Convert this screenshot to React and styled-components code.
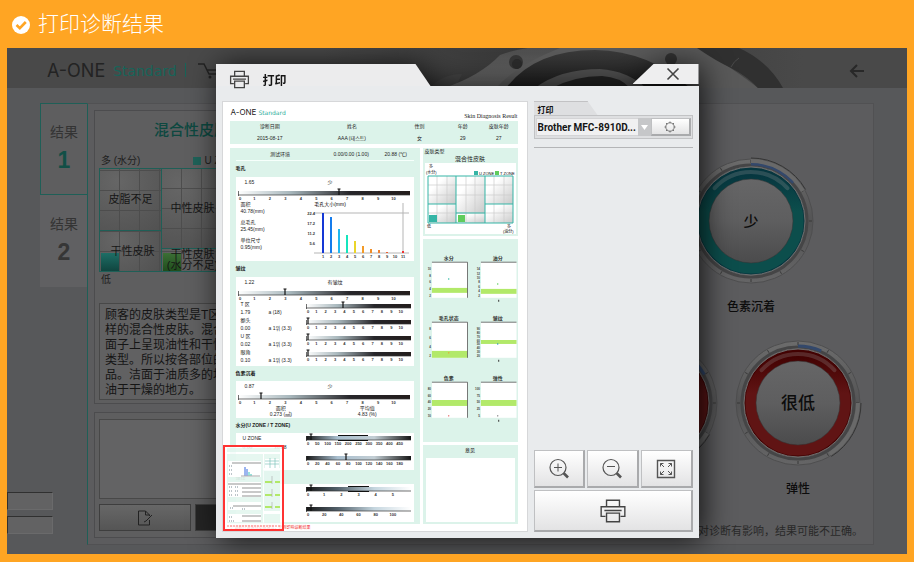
import React from 'react';
import styled, { createGlobalStyle } from 'styled-components';

const teal = '#1f5f57';
const mint = '#dcf3ea';

const GlobalStyle = createGlobalStyle`
  *, *::before, *::after { box-sizing: border-box; }
  body { margin: 0; background: #ffa523; }
  body, button, select, input, textarea { font-family: "Liberation Sans", "Noto Sans CJK SC", sans-serif; }
  h1, h2, h3, p, ul { margin: 0; padding: 0; }
  svg { display: block; }
`;

const Page = styled.main`
  display: flex;
  flex-direction: column;
  min-height: 100vh;
  padding: 0 7px 8px;
  background: #ffa523;
`;
const PageHeader = styled.header`
  display: flex;
  align-items: center;
  gap: 8px;
  height: 48px;
  padding: 2px 0 0 5px;
`;
const PageTitle = styled.h1`
  padding-bottom: 6px;
  font: 300 21px/32px "Noto Sans CJK SC", sans-serif;
  color: #fff;
`;
const Screen = styled.div`
  position: relative;
  flex: 1;
  display: flex;
  flex-direction: column;
  min-height: 506px;
  overflow: hidden;
  background: #57585a;
`;

/* ---- dimmed application behind the dialog ---- */
const AppBar = styled.header`
  position: relative;
  display: flex;
  align-items: center;
  justify-content: space-between;
  height: 40px;
  padding: 6px 42px 0 40px;
  background: #494949;
`;
const BarArt = styled.svg`
  position: absolute;
  left: 316px;
  top: 0;
`;
const Brand = styled.div`
  position: relative;
`;
const BarButton = styled.button`
  position: relative;
  padding: 0;
  border: 0;
  background: none;
`;
const AppBody = styled.div`
  flex: 1;
  display: flex;
  padding: 15px 33px 9px 0;
`;
const Rail = styled.div`
  display: flex;
  flex-direction: column;
  justify-content: space-between;
  width: 80px;
  padding-bottom: 11px;
`;
const Tabs = styled.div`
  display: flex;
  flex-direction: column;
  margin-left: 33px;
`;
const Tab = styled.button`
  display: flex;
  flex-direction: column;
  align-items: center;
  gap: 2px;
  height: 92px;
  padding: 16px 0 0;
  border: 1px solid ${p => (p.$active ? teal : 'transparent')};
  border-right: 0;
  background: ${p => (p.$active ? '#5e5e5f' : '#606062')};
  color: #343434;
  font-size: 14px;
  line-height: 24px;
`;
const TabNumber = styled.strong`
  font-size: 23px;
  line-height: 28px;
  color: ${p => (p.$active ? '#124f46' : '#363636')};
`;
const RailFields = styled.div`
  display: grid;
  gap: 6px;
  width: 46px;
`;
const RailField = styled.input`
  width: 100%;
  height: 18px;
  border: 1px solid #6a6a6b;
  border-top-color: #303030;
  border-left-color: #303030;
  background: #626263;
`;
const Panel = styled.section`
  flex: 1;
  display: flex;
  min-width: 0;
  border: 1px solid #515153;
  border-left: 1px solid ${teal};
  background: #5c5c5e;
`;
const ResultColumn = styled.div`
  display: flex;
  flex-direction: column;
  gap: 8px;
  width: 242px;
  padding: 6px;
`;
const Card = styled.div`
  display: flex;
  flex-direction: column;
  padding: ${p => p.$pad};
  border: 1px solid #4c4c4e;
  background: #5e5e5f;
  flex: ${p => (p.$grow ? 1 : 'none')};
`;
const SkinTitle = styled.h2`
  height: 42px;
  padding: 7px 0 0 55px;
  font: 500 15px/22px "Noto Sans CJK SC", sans-serif;
  color: #0d4840;
  white-space: nowrap;
`;
const AxisRow = styled.div`
  display: flex;
  align-items: center;
  gap: 3px;
  height: 15px;
  padding-left: 2px;
  font-size: 10px;
  line-height: 15px;
  color: #202020;
  white-space: nowrap;
`;
const Legend = styled.span`
  display: flex;
  align-items: center;
  gap: 3px;
  margin-left: 50px;
  &::before { content: ''; width: 8px; height: 8px; background: #1f6259; }
`;
const TypeMap = styled.div`
  display: grid;
  grid-template-columns: 62px 62px 1fr;
  height: 104px;
  border: 1px solid ${teal};
`;
const TypeColumn = styled.div`
  display: grid;
  grid-template-rows: ${p => p.$rows};
  border-right: 1px solid ${teal};
`;
const TypeCell = styled.div`
  display: flex;
  align-items: ${p => (p.$low ? 'end' : 'center')};
  justify-content: center;
  padding: ${p => p.$pad || 0};
  border-bottom: 1px solid ${teal};
  font-size: 11px;
  line-height: 11px;
  color: #161616;
  text-align: center;
  white-space: nowrap;
  background:
    ${p => (p.$chip ? `linear-gradient(${p.$chip}) 1px 100% / 18px 18px no-repeat,` : '')}
    repeating-linear-gradient(90deg, transparent 0 19px, #4d4d4d 19px 20px),
    repeating-linear-gradient(0deg, transparent 0 19px, #4d4d4d 19px 20px),
    radial-gradient(circle at 30% 20%, #666, #515151);
`;
const Description = styled.p`
  margin-top: 16px;
  padding: 4px 5px 3px;
  height: 97px;
  overflow: hidden;
  border: 1px solid #484848;
  background: #616162;
  color: #151515;
  font-size: 12px;
  line-height: 15px;
  white-space: pre;
`;
const Note = styled.textarea`
  display: block;
  flex: 1;
  min-height: 78px;
  border: 1px solid #484848;
  background: #636364;
  resize: none;
`;
const NoteActions = styled.div`
  display: grid;
  grid-template-columns: 92px 1fr;
  gap: 4px;
  margin-top: 5px;
`;
const NoteButton = styled.button`
  display: grid;
  place-items: center;
  height: 27px;
  padding: 0;
  border: 1px solid #3e3e3e;
  background: ${p => (p.$dark ? '#242424' : 'linear-gradient(#676767, #555)')};
`;
const GaugeArea = styled.div`
  flex: 1;
  display: flex;
  flex-direction: column;
  align-items: flex-end;
  min-width: 0;
  padding-top: 53px;
`;
const GaugeRow = styled.div`
  display: flex;
  gap: 15px;
  height: 182px;
  padding-right: ${p => p.$right}px;
`;
const GaugeItem = styled.figure`
  display: flex;
  flex-direction: column;
  align-items: center;
  gap: 11px;
  margin: 0;
`;
const GaugeName = styled.figcaption`
  font: 500 12px/20px "Noto Sans CJK SC", sans-serif;
  color: #0c0c0c;
`;
const Footnote = styled.p`
  padding-right: 10px;
  font-size: 11px;
  line-height: 20px;
  color: #292929;
  white-space: nowrap;
`;

/* ---- print dialog ---- */
const Dialog = styled.div`
  position: absolute;
  inset: 16px 0;
  display: flex;
  flex-direction: column;
  width: calc(100% - 40px);
  max-width: 483px;
  margin: 0 auto;
  filter: drop-shadow(4px 2px 15px rgba(0, 0, 0, 0.8));
`;
const DialogTop = styled.div`
  display: flex;
  justify-content: space-between;
  align-items: flex-start;
  height: 22px;
`;
const TitleTab = styled.div`
  width: 215px;
  height: 22px;
  background: #ececed;
  clip-path: polygon(0 0, 200px 0, 215px 22px, 0 22px);
`;
const DialogTitle = styled.div`
  position: absolute;
  left: 13px;
  top: 5px;
  display: flex;
  align-items: center;
  gap: 13px;
`;
const TitleText = styled.h2`
  font: 700 12px/20px "Noto Sans CJK SC", sans-serif;
  color: #151515;
`;
const CloseButton = styled.button`
  display: grid;
  place-items: center;
  width: 66px;
  height: 20px;
  padding: 0 0 0 14px;
  border: 0;
  background: #eeeeef;
  clip-path: polygon(21px 0, 100% 0, 100% 100%, 0 100%);
`;
const DialogBody = styled.div`
  flex: 1;
  display: grid;
  grid-template-columns: minmax(0, 1fr) 159px;
  gap: 6px;
  padding: 15px 6px 6px;
  background: #e9ebed;
`;
const Side = styled.aside`
  display: flex;
  flex-direction: column;
`;
const SideTab = styled.label`
  width: 64px;
  height: 14px;
  padding-left: 4px;
  background: #dedfe1;
  border-top: 1px solid #c2c2c4;
  clip-path: polygon(0 0, 54px 0, 100% 100%, 0 100%);
  font: 700 8px/15px "Noto Sans CJK SC", sans-serif;
  color: #111;
`;
const PrinterBox = styled.div`
  display: grid;
  grid-template-columns: minmax(0, 1fr) 40px;
  height: 24px;
  padding: 2px 1px;
  border: 1px solid #c2c3c5;
  background: #dedfe1;
`;
const SelectWrap = styled.div`
  display: grid;
  grid-template-columns: minmax(0, 1fr) 13px;
  background: #f0f0f1;
`;
const PrinterSelect = styled.select`
  grid-area: 1 / 1 / 2 / 3;
  appearance: none;
  width: 100%;
  padding: 0 12px 0 1px;
  border: 1px solid #d4d4d6;
  border-radius: 0;
  background: transparent;
  color: #151515;
  font: 700 10px/15px Roboto, sans-serif;
`;
const SelectArrow = styled.span`
  grid-area: 1 / 2;
  display: grid;
  place-items: center;
  background: #c6c7c9;
  pointer-events: none;
`;
const ToolButton = styled.button`
  display: grid;
  place-items: center;
  min-width: 0;
  height: ${p => (p.$h ? `${p.$h}px` : 'auto')};
  padding: 0;
  border: 1px solid #bfc0c2;
  border-right: 2px solid #a9aaac;
  border-bottom: 2px solid #a9aaac;
  background: linear-gradient(#fff, #e3e3e4);
  color: #4a4a4a;
`;
const Rule = styled.hr`
  width: 100%;
  margin: 8px 0 0;
  border: 0;
  border-top: 1px solid #b4b5b7;
`;
const Tools = styled.div`
  display: grid;
  grid-template-columns: repeat(3, 1fr);
  gap: 2px;
  margin-top: auto;
`;
const WideTool = styled(ToolButton)`
  grid-column: 1 / -1;
`;

/* ---- report preview ---- */
const Preview = styled.article`
  position: relative;
  display: flex;
  flex-direction: column;
  padding: 4px 9px 0 7px;
  border: 1px solid #d6d7d9;
  background: #fff;
  color: #222;
  font-size: 5px;
  line-height: 7px;
`;
const ReportHead = styled.div`
  display: flex;
  justify-content: space-between;
  height: 15px;
`;
const ReportBrand = styled.div`
  display: flex;
  gap: 2px;
  padding-left: 1px;
  font: 8px/12px Inter, sans-serif;
  color: #222;
`;
const ReportBrandLine = styled.span`
  font: 6px/13px "DejaVu Sans", sans-serif;
  color: #2eae9c;
`;
const ReportTitle = styled.h3`
  padding-top: 6px;
  font: 400 6px/8px "Liberation Serif", serif;
`;
const InfoTable = styled.table`
  width: 100%;
  height: 23px;
  margin-bottom: 4px;
  border-collapse: collapse;
  table-layout: fixed;
  background: ${mint};
  text-align: center;
  th, td { padding: 2px 0 0; font-weight: 400; }
`;
const ReportGrid = styled.div`
  flex: 1;
  display: grid;
  grid-template-columns: minmax(0, 2fr) minmax(0, 1fr);
  gap: 3px;
`;
const LeftSheet = styled.div`
  padding: 0 6px 2px;
  background: ${mint};
`;
const SheetHead = styled.div`
  display: grid;
  grid-template-columns: 5fr 3fr 2fr;
  align-items: center;
  height: 13px;
  border-bottom: 1px solid #f6fffb;
  text-align: center;
`;
const Label = styled.h3`
  height: ${p => p.$h || 16}px;
  padding-top: 4px;
  font-weight: 700;
  font-size: 5px;
  line-height: 7px;
`;
const Sheet = styled.div`
  height: ${p => p.$h}px;
  padding: 0 3px 0 2px;
  background: #fff;
`;
const Readings = styled.div`
  display: grid;
  grid-template-columns: 1fr 1fr;
  height: 11px;
  padding: 2px 0 0 7px;
`;
const Split = styled.div`
  display: grid;
  grid-template-columns: 68px minmax(0, 1fr);
`;
const Measures = styled.div`
  display: flex;
  flex-direction: column;
  gap: 4px;
  padding-left: 3px;
`;
const AreaReadings = styled.div`
  display: grid;
  grid-template-columns: 28px 1fr;
  grid-auto-rows: 8px;
  padding-left: 3px;
`;
const MoistureReadings = styled.div`
  display: grid;
  grid-template-columns: 1fr 1fr;
  grid-auto-rows: 9px;
  padding: 2px 0 0 5px;
`;
const Line = styled.p`
  font-size: 5px;
  line-height: 7px;
`;
const Halves = styled.div`
  display: grid;
  grid-template-columns: 1fr 1fr;
  grid-auto-rows: 6px;
  text-align: center;
`;
const RightSheets = styled.div`
  display: grid;
  grid-template-rows: 88px minmax(0, 1fr) 79px;
  gap: 3px;
`;
const RightSheet = styled.div`
  display: flex;
  flex-direction: column;
  gap: ${p => p.$gap || 0}px;
  padding: ${p => p.$pad};
  background: ${mint};
`;
const Centered = styled.p`
  font-size: ${p => p.$size || 5}px;
  line-height: 8px;
  text-align: center;
`;
const Blank = styled.div`
  flex: 1;
  background: #fff;
`;
const MiniGrid = styled.div`
  display: grid;
  grid-template-columns: 1fr 1fr;
  gap: 2px 6px;
`;
const BandSvg = styled.svg`
  overflow: visible;
`;
const Warning = styled.p`
  height: 7px;
  color: #f02828;
  font-size: 4px;
  line-height: 7px;
`;
const Thumbnail = styled.div`
  position: absolute;
  left: 0;
  bottom: 0;
  width: 61px;
  height: 86px;
  border: 2px solid #f33;
  background: rgba(255, 255, 255, 0.75);
`;

const PrinterIcon = ({ size, weight = 1.6 }) => (
  <svg width={size} height={size} viewBox="0 0 26 26" fill="none" stroke="#444" strokeWidth={weight} aria-hidden="true">
    <path d="M7 9V3h12v6M6 18H2V9h22v9h-4M7 15h12v8H7zM5 12.5h16" />
  </svg>
);

const dialPoint = (r, deg) => {
  const a = (deg * Math.PI) / 180;
  return `${65 + r * Math.sin(a)} ${65 - r * Math.cos(a)}`;
};
const dialArc = (r, from, to) => `M${dialPoint(r, from)}A${r} ${r} 0 0 1 ${dialPoint(r, to)}`;

function Gauge({ id, label, name, dark, light, level, from, to }) {
  return (
    <GaugeItem>
      <svg width="128" height="128" viewBox="1 1 128 128" role="img" aria-label={`${name} ${label}`}>
        <defs>
          <linearGradient id={`${id}-rim`} x1="0" y1="0" x2="0" y2="1">
            <stop offset="0" stopColor="#6c6c6c" /><stop offset=".5" stopColor="#545455" /><stop offset="1" stopColor="#656566" />
          </linearGradient>
          <linearGradient id={`${id}-ring`} x1="0" y1="0" x2="0" y2="1">
            <stop offset="0" stopColor={dark} /><stop offset=".4" stopColor={light} /><stop offset="1" stopColor={light} />
          </linearGradient>
          <linearGradient id={`${id}-face`} x1="0" y1="0" x2="0" y2="1">
            <stop offset="0" stopColor="#666667" /><stop offset=".5" stopColor="#5e5e5f" /><stop offset="1" stopColor="#4b4b4c" />
          </linearGradient>
        </defs>
        <circle cx="65" cy="65" r="62" fill={`url(#${id}-rim)`} stroke="#4e4e4f" />
        <circle cx="65" cy="65" r="56" fill="none" stroke="#454546" strokeWidth="3" />
        {Array.from({ length: 12 }, (_, i) => (
          <path key={i} d={`M${dialPoint(58, i * 30)}L${dialPoint(61, i * 30)}`} stroke="#393939" />
        ))}
        <path d={dialArc(57, 0, level)} fill="none" stroke="#33486b" strokeWidth="3" />
        <path d={dialArc(60, from, to)} fill="none" stroke="#696969" strokeWidth="4" />
        <path d={dialArc(63, from, to)} fill="none" stroke="#353535" strokeWidth="1" />
        <circle cx="65" cy="65" r="54" fill={dark} stroke="#6e6e6e" />
        <circle cx="65" cy="65" r="47" fill="none" stroke={`url(#${id}-ring)`} strokeWidth="11" />
        <path d={dialArc(49, -48, 48)} fill="none" stroke="#9a9a9a" strokeOpacity=".25" strokeWidth="4" strokeLinecap="round" />
        <circle cx="65" cy="65" r="42" fill={`url(#${id}-face)`} stroke="#333" strokeOpacity=".5" />
        <text x="65" y="71" textAnchor="middle" fontSize={label.length > 1 ? 17 : 15} fontWeight="500" fontFamily="Noto Sans CJK SC, sans-serif" fill="#0c0c0c">{label}</text>
      </svg>
      <GaugeName>{name}</GaugeName>
    </GaugeItem>
  );
}

const tens = ['0', '1', '2', '3', '4', '5', '6', '7', '8', '9', '10'];
const tones = {
  dark: ['#fff', '#a9b8bd', '#27262a', '#231d1c'],
  middle: ['#151515', '#a9bfcf', '#c3ced4', '#151515'],
  light: ['#151515', '#52606a', '#c5d6df', '#fff'],
};

function Scale({ id, width = 172, at, ticks = tens, tone = 'dark', band, height = 13 }) {
  const step = (width - 2) / ticks.length;
  return (
    <svg width="100%" height={height} viewBox={`0 0 ${width} ${height}`} preserveAspectRatio="xMinYMin meet" aria-hidden="true">
      <defs>
        <linearGradient id={id}>
          {tones[tone].map((c, i) => <stop key={c + i} offset={[0, 0.3, 0.65, 1][i]} stopColor={c} />)}
        </linearGradient>
      </defs>
      <rect x="0" y="3" width={width} height="4" fill={`url(#${id})`} />
      <path d={`M0 7h${width}M.5 3v5`} stroke="#333" strokeWidth=".7" />
      {band && <path d={`M${band[0]} 2.5H${band[1]}M${band[0]} 7.5H${band[1]}`} stroke="#111" />}
      <path d={`M${at} 7V1M${at - 1.5} 1h3`} stroke="#111" strokeWidth="1.2" />
      {ticks.map((t, i) => (
        <text key={t} x={1 + i * step} y="12" fontSize="4" fontWeight="700" textAnchor={i ? 'middle' : 'start'} fill="#333">{t}</text>
      ))}
    </svg>
  );
}

const bars = [
  [40, '#1538d5'], [36, '#157cec'], [24, '#20b7ef'], [18, '#15e5bd'], [12, '#ead52a'],
  [7, '#f39b28'], [4, '#f08d28'], [3, '#ee8030'], [1, '#ee6030'], [0, '#e33'], [2, '#e33'],
];

const PoreChart = () => (
  <svg width="100%" height="57" viewBox="0 0 105 57" preserveAspectRatio="xMinYMin meet" role="img" aria-label="毛孔大小分布">
    <text x="24" y="5" fontSize="5" textAnchor="middle">毛孔大小(mm)</text>
    <path d="M8 12H103M8 52H103M97 2V52" stroke="#b5b5b5" />
    {['22.4', '17.2', '11.2', '5.6'].map((t, i) => (
      <text key={t} x="9" y={14 + i * 10} fontSize="4" fontWeight="700" textAnchor="end" fill="#333">{t}</text>
    ))}
    {bars.map(([h, c], i) => (
      <g key={i}>
        <rect x={16 + i * 8} y={52 - h} width="2" height={h} fill={c} />
        <text x={17 + i * 8} y="57" fontSize="4" fontWeight="700" textAnchor="middle" fill="#333">{i + 1}</text>
      </g>
    ))}
  </svg>
);

const SkinMap = () => (
  <svg width="100%" height="71" viewBox="0 0 91 71" preserveAspectRatio="xMidYMin meet" role="img" aria-label="皮肤类型图">
    <defs>
      <linearGradient id="tile" x1="0" y1="0" x2="1" y2="1">
        <stop offset=".3" stopColor="#fff" /><stop offset="1" stopColor="#c9c9c9" />
      </linearGradient>
    </defs>
    <rect width="91" height="71" fill="#fff" />
    <text x="4" y="5" fontSize="4">多</text><text x="1" y="11" fontSize="4">(水分)</text>
    <path d="M49 8h4v4h-4z" fill="#35b5a6" /><text x="54" y="12" fontSize="4">U ZONE</text>
    <path d="M70 8h4v4h-4z" fill="#60cc5c" /><text x="75" y="12" fontSize="4">T ZONE</text>
    {[[3, 13, 28], [3, 41, 19], [31, 13, 37], [31, 50, 10], [60, 13, 28], [60, 41, 19]].map(([x, y, h]) => (
      <rect key={`${x}-${y}`} x={x} y={y} width={x === 31 ? 29 : 28} height={h} fill="url(#tile)" />
    ))}
    <path d="M12 13V60M22 13V60M41 13V60M50 13V60M69 13V60M79 13V60M3 22H88M3 32H88M3 50H88" stroke="#ccc" strokeWidth=".7" />
    <path d="M3 13H88V60H3zM31 13V60M60 13V60M3 41H31M31 50H60M60 41H88" fill="none" stroke="#35b5a6" />
    <path d="M4 52h8v7H4z" fill="#35b5a6" /><path d="M33 52h7v7h-7z" fill="#60cc5c" />
    <text x="2" y="65" fontSize="4">低</text><text x="82" y="65" fontSize="4">多</text><text x="78" y="70" fontSize="4">(油分)</text>
  </svg>
);

function BandChart({ name, band, height, ticks, dot, color, right }) {
  return (
    <BandSvg width="100%" height="58" viewBox="0 0 44 58" role="img" aria-label={name}>
      <text x="24" y="9" fontSize="5" fontWeight="700" textAnchor="middle" fill="#333">{name}</text>
      <rect x="7" y="11" width="36" height="36" fill="#fff" />
      <rect x="7" y={band} width="36" height={height} fill="#b2e969" />
      <path d={right ? 'M7 11H43' : 'M7 11H43V47'} fill="none" stroke="#555" strokeWidth=".8" />
      {ticks.map((t, i) => <text key={t} x="6" y={19 + i * (27 / (ticks.length - 1))} fontSize="3" fontWeight="700" textAnchor="end" fill="#444">{t}</text>)}
      <circle cx="24" cy={dot} r=".7" fill={color} />
      {right && <path d="M25 49v2" stroke="#333" />}
    </BandSvg>
  );
}

const miniCharts = [
  { name: '水分', band: 37, height: 5, ticks: [10, 8, 6, 4, 2], dot: 28, color: '#20b59f' },
  { name: '油分', band: 38, height: 5, ticks: [14, 12, 10, 8, 6, 4, 2], dot: 33, color: '#55cc55', right: true },
  { name: '毛孔状态', band: 40, height: 7, ticks: [8, 6, 4, 2], dot: 42, color: '#ff8c28' },
  { name: '皱纹', band: 29, height: 4, ticks: [90, 80, 70, 60, 50, 40, 30, 20], dot: 33, color: '#2090c0', right: true },
  { name: '色素', band: 29, height: 6, ticks: [80, 60, 40, 20, 10], dot: 45, color: '#e04040' },
  { name: '弹性', band: 29, height: 6, ticks: [100, 75, 50, 25, 5], dot: 45, color: '#606060', right: true },
];

const wrinkleAreas = [
  { id: 'tzone', name: 'T 区', value: '1.79', grade: 'a (18)', at: 37 },
  { id: 'forehead', name: '额头', value: '0.00', grade: 'a 1위 (3.3)', at: 2 },
  { id: 'uzone', name: 'U 区', value: '0.02', grade: 'a 1위 (3.3)', at: 2 },
  { id: 'eye', name: '眼角', value: '0.10', grade: 'a 1위 (3.3)', at: 2 },
];

const MiniPage = () => (
  <svg width="57" height="82" viewBox="0 0 57 82" aria-hidden="true">
    <path d="M2 1H55V5H2zM2 7H38V76H2zM39 7H55V21H39zM39 24H55V64H39zM39 67H55V76H39z" fill={mint} fillOpacity=".7" />
    <path d="M3 14H36V30H3zM3 35H36V50H3zM3 55H36V63H3zM3 67H36V75H3zM40 12H54V21H40z" fill="#fff" />
    <path d="M7 16H36M3 37H36M17 41H36M17 45H36M17 49H36M8 59H36M17 69H36M17 74H36" stroke="#666" strokeWidth=".7" />
    <path d="M20 20v9m2-7v7" stroke="#386be0" /><path d="M24 25v4m2-2v2" stroke="#35c6bb" /><path d="M16 29H35" stroke="#aaa" />
    <path d="M40 14H54M40 17H54M45 11V21M50 11V21" stroke="#70bcb3" strokeWidth=".6" />
    <path d="M40 35h7m3 0h5M40 48h7m3 0h5M40 60h7m3 0h5" stroke="#b2e969" strokeWidth="2" />
    <path d="M47 29v8m0 5v8m0 5v7" stroke="#aaa" strokeWidth=".6" />
    <path d="M4 19h4m-4 4h3m-3 4h4m-4 13h3m3 0h3M4 44h3m3 0h3M4 48h3m3 0h3M5 61h4m8 1h4M4 70h4m-4 4h5" stroke="#7a8b95" strokeDasharray="1 1" />
    <path d="M2 79h53" stroke="#f44" strokeWidth=".7" strokeDasharray="2 1" />
  </svg>
);

function Report() {
  return (
    <Preview>
      <ReportHead>
        <ReportBrand>A-ONE <ReportBrandLine>Standard</ReportBrandLine></ReportBrand>
        <ReportTitle>Skin Diagnosis Result</ReportTitle>
      </ReportHead>
      <InfoTable>
        <colgroup><col width="28%" /><col width="29%" /><col width="18%" /><col width="12%" /><col width="13%" /></colgroup>
        <thead><tr><th>诊断日期</th><th>姓名</th><th>性别</th><th>年龄</th><th>皮肤年龄</th></tr></thead>
        <tbody><tr><td>2015-08-17</td><td>AAA (테스트)</td><td>女</td><td>29</td><td>27</td></tr></tbody>
      </InfoTable>
      <ReportGrid>
        <LeftSheet>
          <SheetHead><span>测试环境</span><span>0.00/0.00 (1.00)</span><span>20.88 (℃)</span></SheetHead>
          <Label>毛孔</Label>
          <Sheet $h={84}>
            <Readings><span>1.65</span><span>少</span></Readings>
            <Scale id="s-pore" at={101} />
            <Split>
              <Measures>
                <div><Line>面积</Line><Line>40.78(mm)</Line></div>
                <div><Line>总毛孔</Line><Line>25.45(mm)</Line></div>
                <div><Line>单位尺寸</Line><Line>0.95(mm)</Line></div>
              </Measures>
              <PoreChart />
            </Split>
          </Sheet>
          <Label>皱纹</Label>
          <Sheet $h={89}>
            <Readings><span>1.22</span><span>有皱纹</span></Readings>
            <Scale id="s-wrinkle" at={47} />
            {wrinkleAreas.map(a => (
              <Split key={a.id}>
                <AreaReadings><Line>{a.name}</Line><span /><Line>{a.value}</Line><Line>{a.grade}</Line></AreaReadings>
                <Scale id={`s-${a.id}`} width={105} height={16} at={a.at} />
              </Split>
            ))}
          </Sheet>
          <Label $h={15}>色素沉着</Label>
          <Sheet $h={37}>
            <Readings><span>0.87</span><span>少</span></Readings>
            <Scale id="s-pigment" at={23} />
            <Halves><Line>面积</Line><Line>平均值</Line><Line>0.273 (㎟)</Line><Line>4.83 (%)</Line></Halves>
          </Sheet>
          <Label $h={15}>水分(U ZONE / T ZONE)</Label>
          <Sheet $h={37}>
            <Split>
              <MoistureReadings><Line>U ZONE</Line><span /><Line>0.00</Line><Line>10.88</Line></MoistureReadings>
              <div>
                <Scale id="s-u" width={105} height={20} at={5} tone="middle" band={[32, 62]} ticks={['0', '50', '100', '150', '200', '250', '300', '350', '400', '450']} />
                <Scale id="s-t" width={105} height={16} at={40} tone="middle" ticks={['0', '20', '40', '60', '80', '100', '120', '140', '160', '180']} />
              </div>
            </Split>
          </Sheet>
          <Label $h={14}>弹性</Label>
          <Sheet $h={38}>
            <Split>
              <span />
              <div>
                <Scale id="s-e1" width={105} height={20} at={5} tone="light" band={[42, 63]} ticks={['0', '1', '2', '3', '4', '5']} />
                <Scale id="s-e2" width={105} height={16} at={5} tone="light" ticks={['0', '20', '40', '60', '80', '100']} />
              </div>
            </Split>
          </Sheet>
        </LeftSheet>
        <RightSheets>
          <RightSheet $pad="0 2px 2px">
            <Line>皮肤类型</Line>
            <Centered $size={6}>混合性皮肤</Centered>
            <SkinMap />
          </RightSheet>
          <RightSheet $pad="12px 0 0 2px">
            <MiniGrid>{miniCharts.map(c => <BandChart key={c.name} {...c} />)}</MiniGrid>
          </RightSheet>
          <RightSheet $pad="1px 3px 2px" $gap={4}>
            <Centered>意见</Centered>
            <Blank />
          </RightSheet>
        </RightSheets>
      </ReportGrid>
      <Warning>※ 诊断时请保持皮肤清洁，否则影响诊断结果</Warning>
      <Thumbnail><MiniPage /></Thumbnail>
    </Preview>
  );
}

function PrintDialog() {
  return (
    <Dialog role="dialog" aria-labelledby="print-title">
      <DialogTop>
        <TitleTab />
        <CloseButton aria-label="关闭">
          <svg width="14" height="14" viewBox="0 0 14 14" stroke="#444" strokeWidth="1.6"><path d="M1.5 1.5l11 11M12.5 1.5l-11 11" /></svg>
        </CloseButton>
      </DialogTop>
      <DialogBody>
        <Report />
        <Side>
          <SideTab htmlFor="printer">打印</SideTab>
          <PrinterBox>
            <SelectWrap>
              <PrinterSelect id="printer"><option>Brother MFC-8910D...</option></PrinterSelect>
              <SelectArrow><svg width="7" height="5"><path d="M0 0h7L3.5 5z" fill="#fff" /></svg></SelectArrow>
            </SelectWrap>
            <ToolButton aria-label="打印机设置">
              <svg width="12" height="12" viewBox="0 0 12 12" fill="none" stroke="#666" strokeWidth=".9">
                <circle cx="6" cy="6" r="4.2" />
                <path d="M6 .5V2M6 10v1.5M.5 6H2M10 6h1.5M2 2l1 1M9 9l1 1M10 2L9 3M3 9l-1 1" />
              </svg>
            </ToolButton>
          </PrinterBox>
          <Rule />
          <Tools>
            <ToolButton $h={38} aria-label="放大">
              <svg width="22" height="22" viewBox="0 0 22 22" fill="none" stroke="#555">
                <circle cx="10" cy="9.5" r="8" strokeWidth="1.2" /><path d="M6 9.5h8M10 5.5v8" /><path d="M15.5 15l4.5 4.5" strokeWidth="2.6" />
              </svg>
            </ToolButton>
            <ToolButton $h={38} aria-label="缩小">
              <svg width="22" height="22" viewBox="0 0 22 22" fill="none" stroke="#555">
                <circle cx="10" cy="9.5" r="8" strokeWidth="1.2" /><path d="M6 8.5h8" /><path d="M15.5 15l4.5 4.5" strokeWidth="2.6" />
              </svg>
            </ToolButton>
            <ToolButton $h={38} aria-label="适合窗口">
              <svg width="20" height="20" viewBox="0 0 20 20" fill="none" stroke="#555">
                <path d="M1.5 1.5h17v17h-17z" strokeWidth="1.4" />
                <path d="M4.5 7.500V4.500h3M4.500 4.500L8 8M12.500 4.500h3v3M15.500 4.500L12 8M4.500 12.500v3h3M4.500 15.500L8 12M12.500 15.500h3v-3M15.500 15.500L12 12" />
              </svg>
            </ToolButton>
            <WideTool $h={42} aria-label="打印"><PrinterIcon size={28} weight={1.3} /></WideTool>
          </Tools>
        </Side>
      </DialogBody>
      <DialogTitle><PrinterIcon size={21} /><TitleText id="print-title">打印</TitleText></DialogTitle>
    </Dialog>
  );
}

export default function App() {
  return (
    <>
      <GlobalStyle />
      <Page>
        <PageHeader>
          <svg width="18" height="18" viewBox="0 0 18 18" aria-hidden="true">
            <circle cx="9" cy="9" r="9" fill="#fff" /><path d="M4.5 9l3.3 3.2 6-6.2" fill="none" stroke="#ffa523" strokeWidth="2.6" />
          </svg>
          <PageTitle>打印诊断结果</PageTitle>
        </PageHeader>
        <Screen>
          <AppBar>
            <BarArt width="480" height="40" viewBox="323 48 480 40" aria-hidden="true">
              <defs>
                <linearGradient id="fade"><stop offset="0" stopColor="#494949" /><stop offset=".45" stopColor="#363636" /><stop offset="1" stopColor="#494949" /></linearGradient>
                <linearGradient id="tube" x1="0" y1="0" x2="0" y2="1"><stop offset="0" stopColor="#4c4c4c" /><stop offset="1" stopColor="#666" /></linearGradient>
                <linearGradient id="arch" x1="0" y1="0" x2="0" y2="1"><stop offset="0" stopColor="#3a3a3a" /><stop offset="1" stopColor="#1c1c1c" /></linearGradient>
              </defs>
              <path d="M323 48H803V88H323z" fill="url(#fade)" />
              <path d="M470 88Q500 70 530 48H700Q738 72 758 88z" fill="#595959" />
              <path d="M430 88Q442 74 462 74L455 88z" fill="#444" />
              <path d="M444 88Q480 76 500 55Q530 44 560 48Q515 66 496 88z" fill="url(#tube)" />
              <path d="M506 88Q535 50 595 50Q650 51 690 88z" fill="url(#arch)" />
              <path d="M535 88Q560 69 600 69Q628 71 646 88z" fill="#4f4f4f" />
              <path d="M552 88Q575 76 602 76Q620 77 630 88z" fill="#222" />
              <circle cx="516" cy="62" r="7" fill="#353535" /><circle cx="517" cy="64" r="5" fill="#2a2a2a" />
              <circle cx="671" cy="59" r="6" fill="#343434" />
              <path d="M697 48H739Q768 61 783 88H758Q747 76 731 68Q716 61 697 48z" fill="#303030" />
              <path d="M731 67q3-6 8-9" fill="none" stroke="#4a4a4a" />
            </BarArt>
            <Brand>
              <svg width="190" height="24" viewBox="0 0 190 24" role="img" aria-label="A-ONE Standard">
                <text x="0" y="18" fontFamily="Inter, sans-serif" fontSize="18" fill="#232323">A-ONE</text>
                <text x="66" y="17" fontFamily="DejaVu Sans, sans-serif" fontSize="14" fill="#176459">Standard</text>
                <path d="M138.5 4v14" stroke="#176459" />
                <path d="M151 5h6l5 10h14M160 11h14" fill="none" stroke="#232323" strokeWidth="1.5" /><circle cx="163" cy="18" r="1.5" fill="#232323" />
              </svg>
            </Brand>
            <BarButton aria-label="返回">
              <svg width="16" height="14" viewBox="0 0 16 14" fill="none" stroke="#282828" strokeWidth="2"><path d="M15 7H2M8 1L2 7l6 6" /></svg>
            </BarButton>
          </AppBar>
          <AppBody>
            <Rail>
              <Tabs>
                <Tab $active>结果<TabNumber $active>1</TabNumber></Tab>
                <Tab>结果<TabNumber>2</TabNumber></Tab>
              </Tabs>
              <RailFields><RailField aria-label="数值 1" /><RailField aria-label="数值 2" /></RailFields>
            </Rail>
            <Panel>
              <ResultColumn>
                <Card $pad="0 4px 3px">
                  <SkinTitle>混合性皮肤</SkinTitle>
                  <AxisRow>多 (水分)<Legend>U ZONE</Legend></AxisRow>
                  <TypeMap>
                    <TypeColumn $rows="62px 1fr">
                      <TypeCell>皮脂不足</TypeCell>
                      <TypeCell $chip="#1e6e66, #10453f" $pad="0 0 0 4px">干性皮肤</TypeCell>
                    </TypeColumn>
                    <TypeColumn $rows="80px 1fr">
                      <TypeCell>中性皮肤</TypeCell>
                      <TypeCell $chip="#3c6f36, #1f4d1c" $low>干性皮肤<br />(水分不足)</TypeCell>
                    </TypeColumn>
                    <TypeColumn $rows="62px 1fr"><TypeCell /><TypeCell /></TypeColumn>
                  </TypeMap>
                  <AxisRow>低</AxisRow>
                  <Description>{'顾客的皮肤类型是T区和U区不一\n样的混合性皮肤。混合性皮肤在\n面子上呈现油性和干性两种皮肤\n类型。所以按各部位的状态用产\n品。洁面于油质多的地方，保湿\n油于干燥的地方。'}</Description>
                </Card>
                <Card $pad="6px 4px" $grow>
                  <Note aria-label="备注" />
                  <NoteActions>
                    <NoteButton aria-label="编辑">
                      <svg width="16" height="16" viewBox="0 0 16 16" fill="none" stroke="#222"><path d="M12.5 10v5h-11V1h7l4 4v1M8.5 1v4h4M15 5l-6 6-2 1" /></svg>
                    </NoteButton>
                    <NoteButton $dark aria-label="保存" />
                  </NoteActions>
                </Card>
              </ResultColumn>
              <GaugeArea>
                <GaugeRow $right={58}>
                  <Gauge id="pigment" label="少" name="色素沉着" dark="#06363f" light="#0c4e4c" level={48} from={0} to={60} />
                </GaugeRow>
                <GaugeRow $right={11}>
                  <Gauge id="wrinkle" label="很多" name="皱纹" dark="#3b0303" light="#591515" level={60} from={120} to={150} />
                  <Gauge id="elastic" label="很低" name="弹性" dark="#430202" light="#601414" level={24} from={90} to={148} />
                </GaugeRow>
                <Footnote>故对诊断有影响，结果可能不正确。</Footnote>
              </GaugeArea>
            </Panel>
          </AppBody>
          <PrintDialog />
        </Screen>
      </Page>
    </>
  );
}
